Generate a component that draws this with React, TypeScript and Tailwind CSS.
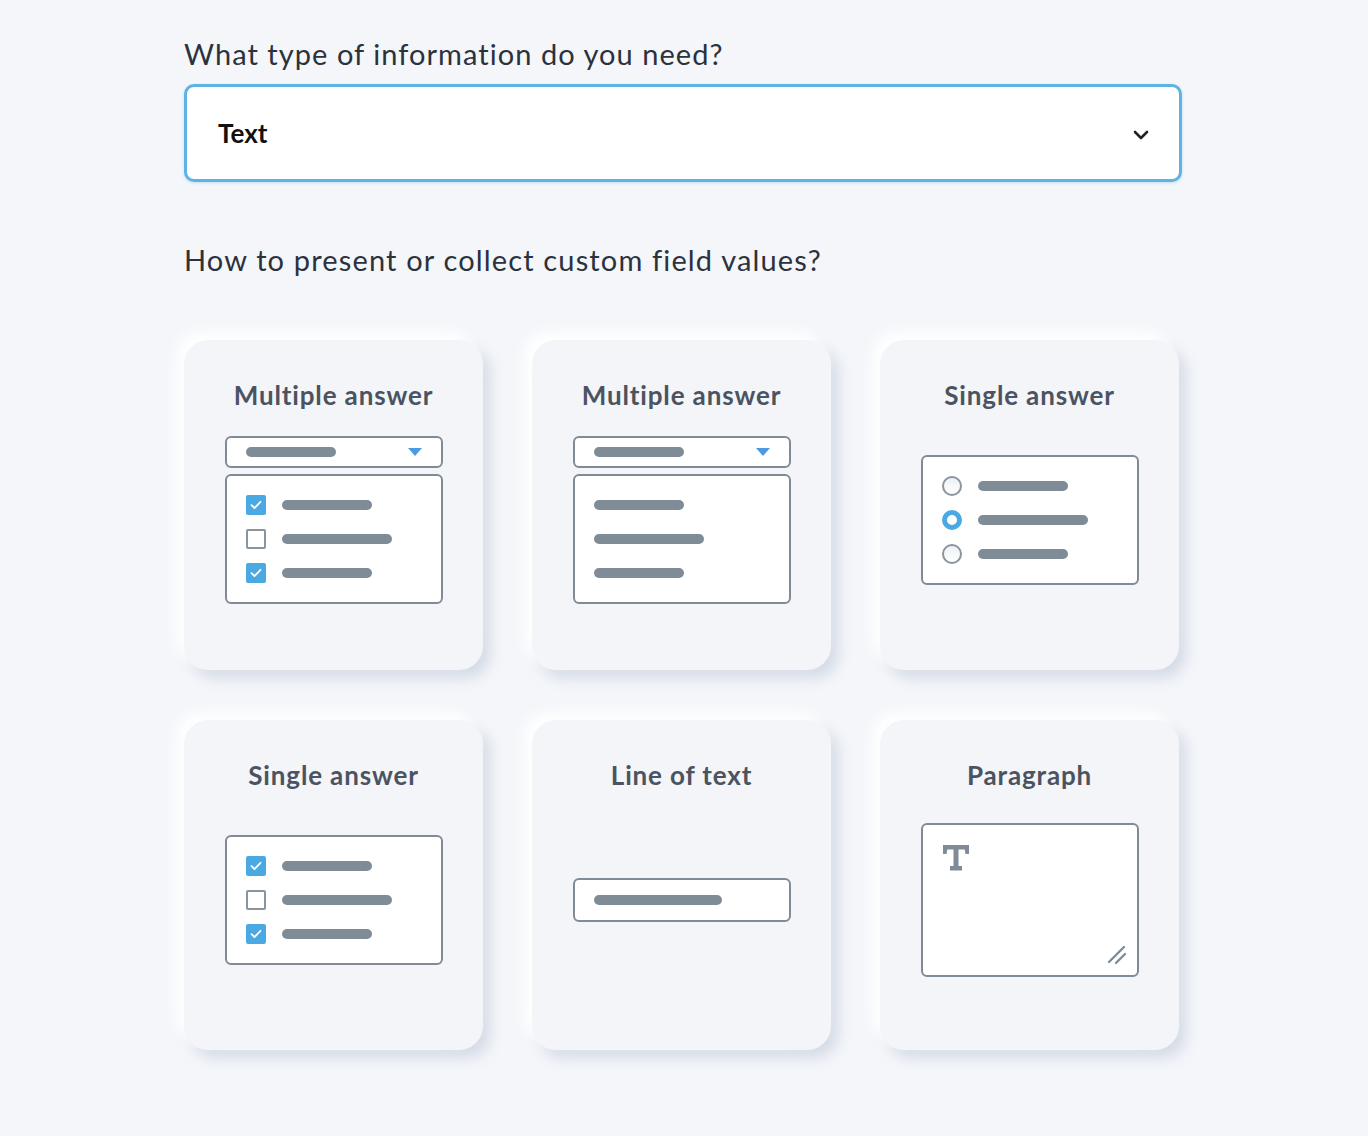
import { ReactNode } from 'react'

const font = { fontFamily: 'Lato, "Noto Sans", sans-serif' }

function Bar({ w }: { w: number }) {
  return <span className="block h-[10px] rounded-full bg-[#7f8c98]" style={{ width: w }} />
}

function Check({ on }: { on: boolean }) {
  if (!on) {
    return <span className="block h-[20px] w-[20px] rounded-[2px] border-2 border-[#8a949e] bg-white" />
  }
  return (
    <span className="flex h-[20px] w-[20px] items-center justify-center rounded-[2px] bg-[#4aa8e3]">
      <svg width="12" height="10" viewBox="0 0 12 10" fill="none">
        <path d="M1.5 5.2 4.5 8 10.5 1.8" stroke="#fff" strokeWidth="1.8" strokeLinecap="round" strokeLinejoin="round" />
      </svg>
    </span>
  )
}

function Radio({ on }: { on: boolean }) {
  if (on) {
    return <span className="block h-[20px] w-[20px] rounded-full border-[5px] border-[#4aa8e3] bg-white" />
  }
  return <span className="block h-[20px] w-[20px] rounded-full border-2 border-[#8a949e] bg-gradient-to-b from-[#eef1f4] to-white" />
}

function DropHead() {
  return (
    <div className="flex h-[32px] w-[218px] items-center justify-between rounded-[6px] border-2 border-[#7f8c98] bg-white pl-[19px] pr-[19px]">
      <Bar w={90} />
      <svg width="14" height="8" viewBox="0 0 14 8">
        <path d="M0 0h14L7 8z" fill="#4a9be3" />
      </svg>
    </div>
  )
}

function ListBox({ children }: { children: ReactNode }) {
  return (
    <div className="flex w-[218px] flex-col gap-[14px] rounded-[6px] border-2 border-[#7f8c98] bg-white py-[19px] pl-[19px]">
      {children}
    </div>
  )
}

function Row({ children }: { children: ReactNode }) {
  return <div className="flex h-[20px] items-center gap-[16px]">{children}</div>
}

function CheckList() {
  return (
    <ListBox>
      {[
        [true, 90],
        [false, 110],
        [true, 90],
      ].map(([on, w], i) => (
        <Row key={i}>
          <Check on={on as boolean} />
          <Bar w={w as number} />
        </Row>
      ))}
    </ListBox>
  )
}

function Card({ title, children }: { title: string; children: ReactNode }) {
  return (
    <div className="flex h-[330px] w-[299px] flex-col items-center rounded-[24px] bg-[#f3f5f9] pt-[40px] shadow-[-8px_-8px_14px_#ffffff,7px_8px_14px_rgba(170,182,200,0.42)]">
      <h3 className="text-[26px] font-bold leading-[30px] tracking-[0.85px] text-[#4b5361]">{title}</h3>
      <div className="flex h-[220px] w-full items-center justify-center">{children}</div>
    </div>
  )
}

function App() {
  return (
    <main className="min-h-[1136px] bg-[#f4f6fa]" style={font}>
      <div className="w-[998px] pt-[34px]" style={{ marginLeft: 184 }}>
        <h1 className="text-[29px] leading-[40px] tracking-[1.05px] text-[#2b323c]">What type of information do you need?</h1>
        <div className="mt-[10px] flex h-[98px] items-center justify-between rounded-[10px] border-[3px] border-[#5fb2e4] bg-white pl-[31px] pr-[30px] shadow-[0_1px_3px_rgba(95,178,228,0.35)]">
          <span className="text-[26px] font-bold text-[#111]">Text</span>
          <svg className="mt-[3px]" width="16" height="10" viewBox="0 0 16 10" fill="none">
            <path d="M2 2l6 6 6-6" stroke="#222" strokeWidth="2.6" strokeLinecap="round" strokeLinejoin="round" />
          </svg>
        </div>

        <h2 className="mt-[58px] text-[29px] leading-[40px] tracking-[1.15px] text-[#2b323c]">How to present or collect custom field values?</h2>

        <div className="mt-[60px] grid grid-cols-[299px_299px_299px] gap-x-[49px] gap-y-[50px]">
          <Card title="Multiple answer">
            <div className="flex flex-col gap-[6px]">
              <DropHead />
              <CheckList />
            </div>
          </Card>
          <Card title="Multiple answer">
            <div className="flex flex-col gap-[6px]">
              <DropHead />
              <ListBox>
                <Row>
                  <Bar w={90} />
                </Row>
                <Row>
                  <Bar w={110} />
                </Row>
                <Row>
                  <Bar w={90} />
                </Row>
              </ListBox>
            </div>
          </Card>
          <Card title="Single answer">
            <ListBox>
              {[
                [false, 90],
                [true, 110],
                [false, 90],
              ].map(([on, w], i) => (
                <Row key={i}>
                  <Radio on={on as boolean} />
                  <Bar w={w as number} />
                </Row>
              ))}
            </ListBox>
          </Card>
          <Card title="Single answer">
            <CheckList />
          </Card>
          <Card title="Line of text">
            <div className="flex h-[44px] w-[218px] items-center rounded-[6px] border-2 border-[#7f8c98] bg-white pl-[19px]">
              <Bar w={128} />
            </div>
          </Card>
          <Card title="Paragraph">
            <div className="relative h-[154px] w-[218px] rounded-[6px] border-2 border-[#7f8c98] bg-white">
              <svg className="absolute left-[19px] top-[19px]" width="28" height="28" viewBox="0 0 28 28">
                <path
                  d="M1 1h26v9h-3.5l-0.8-4.5h-6.2V22h3.5v4.5H8V22h3.5V5.5H5.3L4.5 10H1z"
                  fill="#7f8c98"
                />
              </svg>
              <svg className="absolute bottom-[10px] right-[10px]" width="20" height="20" viewBox="0 0 20 20">
                <path d="M2 17 17 2M9 18 18 9" stroke="#7f8c98" strokeWidth="2.4" strokeLinecap="round" />
              </svg>
            </div>
          </Card>
        </div>
      </div>
    </main>
  )
}

export default App
